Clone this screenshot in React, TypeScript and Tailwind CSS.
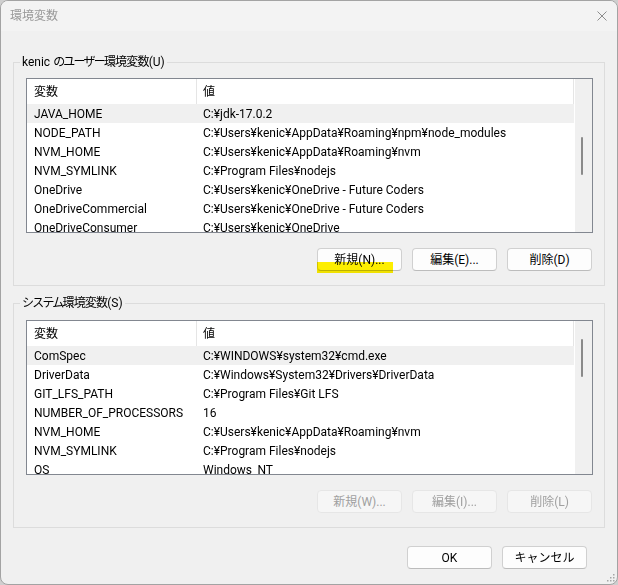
import React from "react";

type Row = { name: string; value: string };

const userVars: Row[] = [
  { name: "JAVA_HOME", value: "C:¥jdk-17.0.2" },
  { name: "NODE_PATH", value: "C:¥Users¥kenic¥AppData¥Roaming¥npm¥node_modules" },
  { name: "NVM_HOME", value: "C:¥Users¥kenic¥AppData¥Roaming¥nvm" },
  { name: "NVM_SYMLINK", value: "C:¥Program Files¥nodejs" },
  { name: "OneDrive", value: "C:¥Users¥kenic¥OneDrive - Future Coders" },
  { name: "OneDriveCommercial", value: "C:¥Users¥kenic¥OneDrive - Future Coders" },
  { name: "OneDriveConsumer", value: "C:¥Users¥kenic¥OneDrive" },
];

const systemVars: Row[] = [
  { name: "ComSpec", value: "C:¥WINDOWS¥system32¥cmd.exe" },
  { name: "DriverData", value: "C:¥Windows¥System32¥Drivers¥DriverData" },
  { name: "GIT_LFS_PATH", value: "C:¥Program Files¥Git LFS" },
  { name: "NUMBER_OF_PROCESSORS", value: "16" },
  { name: "NVM_HOME", value: "C:¥Users¥kenic¥AppData¥Roaming¥nvm" },
  { name: "NVM_SYMLINK", value: "C:¥Program Files¥nodejs" },
  { name: "OS", value: "Windows_NT" },
];

function VarList({ rows, thumbTop }: { rows: Row[]; thumbTop: "top" | "mid" }) {
  return (
    <div className="h-[155px] border border-[#828790] bg-white flex overflow-hidden">
      <div className="flex-1 min-w-0 overflow-hidden">
        <div className="flex h-[25px]">
          <div className="w-[170px] shrink-0 pl-[7px] border-r border-[#e5e5e5] flex items-center">変数</div>
          <div className="flex-1 pl-[6px] border-r border-[#e5e5e5] flex items-center">値</div>
        </div>
        {rows.map((r, i) => (
          <div key={r.name + i} className={`flex h-[19px] items-center whitespace-nowrap ${i === 0 ? "bg-[#f0f0f0]" : ""}`}>
            <div className="w-[170px] shrink-0 pl-[7px]">{r.name}</div>
            <div className="flex-1 pl-[6px]">{r.value}</div>
          </div>
        ))}
      </div>
      <div className="w-[18px] shrink-0 bg-[#f0f0f0] border-l border-white">
        <div
          className={`ml-[6px] w-[2px] h-[38px] rounded-full bg-[#8a8a8a] ${thumbTop === "mid" ? "mt-[58px]" : "mt-[18px]"}`}
        />
      </div>
    </div>
  );
}

function Btn({ label, disabled, children }: { label: string; disabled?: boolean; children?: React.ReactNode }) {
  return (
    <div
      className={`relative w-[85px] h-[23px] rounded-[4px] border flex items-center justify-center ${
        disabled
          ? "bg-[#f6f6f6] border-[#e6e6e6] text-[#a0a0a0]"
          : "bg-[#fdfdfd] border-[#d0d0d0] border-b-[#bcbcbc] text-black"
      }`}
    >
      {label}
      {children}
    </div>
  );
}

export default function App() {
  return (
    <div className="w-[618px] h-[585px] bg-[#cfcfcf] font-['Roboto','Noto_Sans_CJK_JP',sans-serif] text-[12px] leading-[16px] text-black">
      <div className="relative w-[618px] h-[585px] rounded-[8px] border border-[#a3a3a3] bg-[#f0f0f0] overflow-hidden flex flex-col">
        {/* title bar */}
        <div className="h-[30px] shrink-0 bg-[#f3f3f3] flex items-center justify-between pl-[9px] pr-[10px]">
          <span className="text-[#9a9a9a]">環境変数</span>
          <svg width="10" height="10" viewBox="0 0 10 10" className="block">
            <path d="M0.5 0.5 L9.5 9.5 M9.5 0.5 L0.5 9.5" stroke="#8c8c8c" strokeWidth="1" fill="none" />
          </svg>
        </div>

        <div className="px-[12px] flex flex-col">
          <fieldset className="mt-[23px] border border-[#dcdcdc] pl-[12px] pr-[11px] pt-[8px] pb-[14px] min-w-0">
            <legend className="ml-[-6px] px-[2px] leading-[16px]">
              kenic <span className="tracking-[-1.8px]">のユーザー</span>
              <span className="tracking-[-0.8px]">環境変数</span>(U)
            </legend>
            <VarList rows={userVars} thumbTop="mid" />
            <div className="mt-[15px] mr-[1px] flex justify-end gap-[10px]">
              <Btn label="新規(N)...">
                <span className="absolute left-[-1px] top-[13px] w-[76px] h-[11px] bg-[#fff000] mix-blend-multiply" />
              </Btn>
              <Btn label="編集(E)..." />
              <Btn label="削除(D)" />
            </div>
          </fieldset>

          <fieldset className="mt-[9px] border border-[#dcdcdc] pl-[12px] pr-[11px] pt-[9px] pb-[14px] min-w-0">
            <legend className="ml-[-6px] px-[2px] leading-[16px]">
              <span className="tracking-[-1.8px]">システム</span>
              <span className="tracking-[-0.8px]">環境変数</span>(S)
            </legend>
            <VarList rows={systemVars} thumbTop="top" />
            <div className="mt-[15px] mr-[1px] flex justify-end gap-[10px]">
              <Btn label="新規(W)..." disabled />
              <Btn label="編集(I)..." disabled />
              <Btn label="削除(L)" disabled />
            </div>
          </fieldset>

          <div className="mt-[18px] pr-[18px] flex justify-end gap-[10px]">
            <Btn label="OK" />
            <Btn label="キャンセル" />
          </div>
        </div>

        {/* resize grip */}
        <svg width="9" height="9" viewBox="0 0 9 9" className="absolute right-[2px] bottom-[2px]">
          <rect x="7" y="1" width="1.5" height="1.5" fill="#a6a6a6" />
          <rect x="4" y="4" width="1.5" height="1.5" fill="#a6a6a6" />
          <rect x="7" y="4" width="1.5" height="1.5" fill="#a6a6a6" />
          <rect x="1" y="7" width="1.5" height="1.5" fill="#a6a6a6" />
          <rect x="4" y="7" width="1.5" height="1.5" fill="#a6a6a6" />
          <rect x="7" y="7" width="1.5" height="1.5" fill="#a6a6a6" />
        </svg>
      </div>
    </div>
  );
}
